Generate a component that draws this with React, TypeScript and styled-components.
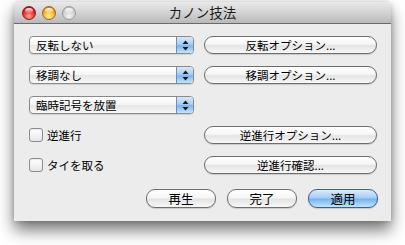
import React from "react";
import styled, { createGlobalStyle } from "styled-components";

const GlobalStyle = createGlobalStyle`
  html, body { margin: 0; padding: 0; background: #ffffff; }
  body { font-family: "Noto Sans CJK JP", "Noto Sans", sans-serif; }
  * { box-sizing: border-box; }
`;

const Page = styled.div`
  width: 405px;
  height: 245px;
  padding: 2px 0 0 14px;
  overflow: hidden;
`;

const Window = styled.div`
  width: 377px;
  height: 219px;
  background: #ececec;
  border-radius: 5px 5px 0 0;
  box-shadow: 0 9px 16px rgba(0, 0, 0, 0.55), 0 0 5px rgba(0, 0, 0, 0.18);
  display: flex;
  flex-direction: column;
  overflow: hidden;
`;

const TitleBar = styled.div`
  height: 22px;
  flex: none;
  display: grid;
  grid-template-columns: 1fr auto 1fr;
  align-items: center;
  background: linear-gradient(#e9e9e9 0%, #d3d3d3 50%, #b9b9b9 100%);
  border-bottom: 1px solid #6a6a6a;
`;

const Lights = styled.div`
  display: flex;
  gap: 6px;
  padding-left: 8px;
  align-items: center;
`;

const Light = styled.span<{ $kind: "close" | "min" | "zoom" }>`
  width: 14px;
  height: 14px;
  border-radius: 50%;
  border: 1px solid
    ${(p) => (p.$kind === "close" ? "#8c1a1a" : p.$kind === "min" ? "#a3641a" : "#9a9a9a")};
  background: ${(p) =>
    p.$kind === "close"
      ? "radial-gradient(circle at 50% 78%, #ffa898 0%, #f2443c 40%, #c80f18 75%, #8f0b10 100%)"
      : p.$kind === "min"
      ? "radial-gradient(circle at 50% 78%, #fff2a0 0%, #f9c23c 40%, #e08b0e 75%, #b06208 100%)"
      : "radial-gradient(circle at 50% 78%, #f4f4f4 0%, #d6d6d6 45%, #bdbdbd 80%, #a9a9a9 100%)"};
  position: relative;
  &::after {
    content: "";
    position: absolute;
    left: 2px;
    top: 1px;
    width: 8px;
    height: 5px;
    border-radius: 50%;
    background: linear-gradient(rgba(255, 255, 255, 0.95), rgba(255, 255, 255, 0.1));
  }
`;

const Title = styled.div`
  font-size: 13.5px;
  color: #1a1a1a;
  line-height: 1;
  padding-top: 1px;
`;

const Content = styled.div`
  display: grid;
  grid-template-columns: 165px 173px;
  grid-auto-rows: 18px;
  column-gap: 10px;
  row-gap: 12px;
  padding: 12px 14px 0 15px;
`;

const Popup = styled.div`
  height: 18px;
  border: 1px solid #8a8a8a;
  border-radius: 4px;
  background: linear-gradient(#ffffff 0%, #f5f5f5 48%, #e6e6e6 52%, #f8f8f8 100%);
  display: flex;
  align-items: center;
  overflow: hidden;
  box-shadow: 0 1px 1px rgba(0, 0, 0, 0.12);
`;

const PopupLabel = styled.span`
  flex: 1;
  font-size: 11.5px;
  line-height: 16px;
  padding-left: 6px;
  color: #000;
`;

const Stepper = styled.span`
  width: 17px;
  height: 100%;
  border-left: 1px solid #6d8cc0;
  background: linear-gradient(#d8e9fb 0%, #a9cdf3 45%, #7db4ee 55%, #c3e6fd 100%);
  display: flex;
  align-items: center;
  justify-content: center;
`;

const Button = styled.button<{ $default?: boolean }>`
  height: 18px;
  padding: 0;
  border-radius: 9px;
  border: 1px solid ${(p) => (p.$default ? "#3e5c9e" : "#6e6e6e")};
  background: ${(p) =>
    p.$default
      ? "linear-gradient(#dcebfc 0%, #a8cdf5 45%, #78b4ef 55%, #bfe6fe 100%)"
      : "linear-gradient(#ffffff 0%, #f6f6f6 45%, #e4e4e4 55%, #f8f8f8 100%)"};
  box-shadow: 0 1px 1px rgba(0, 0, 0, 0.15);
  font-family: "Noto Sans CJK JP", "Noto Sans", sans-serif;
  font-size: 11.5px;
  line-height: 16px;
  color: #000;
  display: flex;
  align-items: center;
  justify-content: center;
`;

const FooterButton = styled(Button)`
  width: 70px;
  height: 19px;
  font-size: 12.5px;
`;

const CheckRow = styled.label`
  display: flex;
  align-items: center;
  gap: 4px;
  font-size: 11.5px;
  color: #000;
`;

const Box = styled.span`
  width: 14px;
  height: 14px;
  border: 1px solid #8c8c8c;
  border-radius: 3px;
  background: linear-gradient(#ffffff 0%, #f3f3f3 50%, #e6e6e6 100%);
  box-shadow: inset 0 1px 1px rgba(0, 0, 0, 0.08);
`;

const Empty = styled.div``;

const Footer = styled.div`
  display: flex;
  justify-content: flex-end;
  gap: 11px;
  padding: 15px 13px 0 0;
`;

const Arrows = () => (
  <svg width="7" height="11" viewBox="0 0 7 11">
    <path d="M3.5 0.5 L6.5 4 L0.5 4 Z" fill="#1a1a1a" />
    <path d="M3.5 10.5 L6.5 7 L0.5 7 Z" fill="#1a1a1a" />
  </svg>
);

const Select = ({ label }: { label: string }) => (
  <Popup>
    <PopupLabel>{label}</PopupLabel>
    <Stepper>
      <Arrows />
    </Stepper>
  </Popup>
);

const Check = ({ label }: { label: string }) => (
  <CheckRow>
    <Box />
    {label}
  </CheckRow>
);

export default function App() {
  return (
    <>
      <GlobalStyle />
      <Page>
        <Window>
          <TitleBar>
            <Lights>
              <Light $kind="close" />
              <Light $kind="min" />
              <Light $kind="zoom" />
            </Lights>
            <Title>カノン技法</Title>
            <span />
          </TitleBar>
          <Content>
            <Select label="反転しない" />
            <Button>反転オプション...</Button>
            <Select label="移調なし" />
            <Button>移調オプション...</Button>
            <Select label="臨時記号を放置" />
            <Empty />
            <Check label="逆進行" />
            <Button>逆進行オプション...</Button>
            <Check label="タイを取る" />
            <Button>逆進行確認...</Button>
          </Content>
          <Footer>
            <FooterButton>再生</FooterButton>
            <FooterButton>完了</FooterButton>
            <FooterButton $default>適用</FooterButton>
          </Footer>
        </Window>
      </Page>
    </>
  );
}
